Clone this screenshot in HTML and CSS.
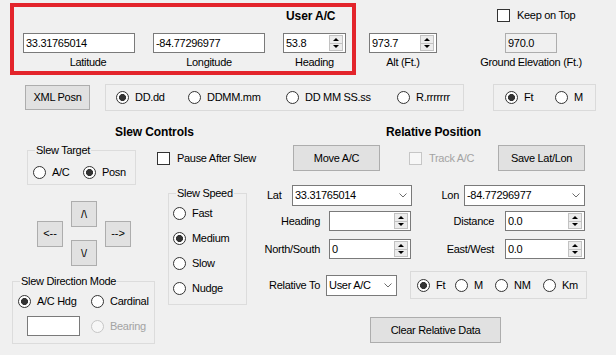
FILE: index.html
```html
<!DOCTYPE html>
<html lang="en">
<head>
  <meta charset="UTF-8" />
  <title>Slew</title>
  <link rel="stylesheet" href="styles.css">
</head>
<body>
  <!-- User A/C position -->
  <div class="top">
    <div class="user-ac">
      <div class="title">User A/C</div>
      <div class="fields">
        <div class="field">
          <div class="textbox tb-coord">33.31765014</div>
          <div class="caption shift">Latitude</div>
        </div>
        <div class="field">
          <div class="textbox tb-coord">-84.77296977</div>
          <div class="caption">Longitude</div>
        </div>
        <div class="field">
          <div class="textbox tb-hdg">53.8<span class="spin"><span class="up"></span><span class="down"></span></span></div>
          <div class="caption">Heading</div>
        </div>
      </div>
    </div>

    <div class="field alt">
      <div class="textbox tb-alt">973.7<span class="spin"><span class="up"></span><span class="down"></span></span></div>
      <div class="caption">Alt (Ft.)</div>
    </div>

    <div class="ground-col">
      <div class="check"><span class="box"></span>Keep on Top</div>
      <div class="field ground">
        <div class="textbox tb-elev readonly">970.0</div>
        <div class="caption">Ground Elevation (Ft.)</div>
      </div>
    </div>
  </div>

  <!-- Format toolbar -->
  <div class="toolbar">
    <div class="btn xml">XML Posn</div>
    <div class="radio-panel format-panel">
      <div class="radio on"><span class="dot"></span>DD.dd</div>
      <div class="radio"><span class="dot"></span>DDMM.mm</div>
      <div class="radio"><span class="dot"></span>DD MM SS.ss</div>
      <div class="radio"><span class="dot"></span>R.rrrrrrr</div>
    </div>
    <div class="radio-panel alt-units">
      <div class="radio on"><span class="dot"></span>Ft</div>
      <div class="radio"><span class="dot"></span>M</div>
    </div>
  </div>

  <div class="headings">
    <div class="heading-slew">Slew Controls</div>
    <div>Relative Position</div>
  </div>

  <div class="main">
    <!-- Slew target, arrows, direction -->
    <div class="slew-left">
      <fieldset class="group slew-target">
        <legend>Slew Target</legend>
        <div class="options">
          <div class="radio"><span class="dot"></span>A/C</div>
          <div class="radio on"><span class="dot"></span>Posn</div>
        </div>
      </fieldset>

      <div class="pad">
        <div class="btn arrow">&lt;--</div>
        <div class="pad-col">
          <div class="btn arrow">/\</div>
          <div class="btn arrow">\/</div>
        </div>
        <div class="btn arrow">--&gt;</div>
      </div>

      <fieldset class="group slew-dir">
        <legend>Slew Direction Mode</legend>
        <div class="options">
          <div class="radio on"><span class="dot"></span>A/C Hdg</div>
          <div class="radio"><span class="dot"></span>Cardinal</div>
          <div class="textbox tb-bearing"></div>
          <div class="radio off"><span class="dot"></span>Bearing</div>
        </div>
      </fieldset>
    </div>

    <!-- Pause + speed -->
    <div class="slew-mid">
      <div class="check pause"><span class="box"></span>Pause After Slew</div>
      <fieldset class="group slew-speed">
        <legend>Slew Speed</legend>
        <div class="options">
          <div class="radio"><span class="dot"></span>Fast</div>
          <div class="radio on"><span class="dot"></span>Medium</div>
          <div class="radio"><span class="dot"></span>Slow</div>
          <div class="radio"><span class="dot"></span>Nudge</div>
        </div>
      </fieldset>
    </div>

    <!-- Relative position -->
    <div class="relative">
      <div class="row actions">
        <div class="btn btn-wide move">Move A/C</div>
        <div class="check track off"><span class="box"></span>Track A/C</div>
        <div class="btn btn-wide">Save Lat/Lon</div>
      </div>

      <div class="row latlon">
        <div class="lbl lbl-lat">Lat</div>
        <div class="combo combo-lat">33.31765014<svg class="chev" width="8" height="5" viewBox="0 0 8 5"><polyline points="0.5,0.5 4,4 7.5,0.5" fill="none" stroke="#6d6d6d" stroke-width="1"/></svg></div>
        <div class="lbl lbl-lon">Lon</div>
        <div class="combo combo-lon">-84.77296977<svg class="chev" width="8" height="5" viewBox="0 0 8 5"><polyline points="0.5,0.5 4,4 7.5,0.5" fill="none" stroke="#6d6d6d" stroke-width="1"/></svg></div>
      </div>

      <div class="row offsets">
        <div class="lbl lbl-left">Heading</div>
        <div class="textbox tb-rel-left"><span class="spin"><span class="up"></span><span class="down"></span></span></div>
        <div class="lbl lbl-right">Distance</div>
        <div class="textbox tb-rel-right">0.0<span class="spin"><span class="up"></span><span class="down"></span></span></div>
      </div>

      <div class="row offsets second">
        <div class="lbl lbl-left">North/South</div>
        <div class="textbox tb-rel-left">0<span class="spin"><span class="up"></span><span class="down"></span></span></div>
        <div class="lbl lbl-right">East/West</div>
        <div class="textbox tb-rel-right">0.0<span class="spin"><span class="up"></span><span class="down"></span></span></div>
      </div>

      <div class="row relto">
        <div class="lbl lbl-relto">Relative To</div>
        <div class="combo combo-relto">User A/C<svg class="chev" width="8" height="5" viewBox="0 0 8 5"><polyline points="0.5,0.5 4,4 7.5,0.5" fill="none" stroke="#6d6d6d" stroke-width="1"/></svg></div>
        <div class="radio-panel dist-units">
          <div class="radio on"><span class="dot"></span>Ft</div>
          <div class="radio"><span class="dot"></span>M</div>
          <div class="radio"><span class="dot"></span>NM</div>
          <div class="radio"><span class="dot"></span>Km</div>
        </div>
      </div>

      <div class="btn clear">Clear Relative Data</div>
    </div>
  </div>
</body>
</html>
```

FILE: styles.css
```css
* {
  box-sizing: border-box;
}

html, body {
  background: #f0f0f0;
}

body {
  margin: 0;
  width: 616px;
  height: 355px;
  overflow: hidden;
  color: #000;
  font-family: "Liberation Sans", Arial, sans-serif;
  font-size: 11px;
  line-height: 13px;
  letter-spacing: -0.3px;
}

/* ── common controls ── */
.textbox {
  height: 20px;
  display: flex;
  align-items: center;
  padding-left: 2px;
  background: #fff;
  border: 1px solid #7a7a7a;
  white-space: nowrap;
}

.textbox.readonly {
  background: #f0f0f0;
  border-color: #adadad;
}

.spin {
  width: 14px;
  height: 16px;
  margin: 0 2px 0 auto;
  display: flex;
  flex-direction: column;
  background: #ececec;
  border: 1px solid #c2c2c2;
}

.spin span {
  flex: 1;
  display: flex;
  align-items: center;
  justify-content: center;
}

.spin span + span {
  border-top: 1px solid #c2c2c2;
}

.spin .up::before {
  content: '';
  border-left: 3px solid transparent;
  border-right: 3px solid transparent;
  border-bottom: 3px solid #000;
}

.spin .down::before {
  content: '';
  border-left: 3px solid transparent;
  border-right: 3px solid transparent;
  border-top: 3px solid #000;
}

.combo {
  height: 21px;
  display: flex;
  align-items: center;
  padding: 0 4px 0 2px;
  background: #fff;
  border: 1px solid #7a7a7a;
  white-space: nowrap;
}

.combo .chev {
  margin-left: auto;
  flex: none;
}

.btn {
  display: flex;
  align-items: center;
  justify-content: center;
  background: #e1e1e1;
  border: 1px solid #adadad;
  white-space: nowrap;
}

.check {
  display: flex;
  align-items: center;
  gap: 7px;
  white-space: nowrap;
}

.check .box {
  width: 13px;
  height: 13px;
  flex: none;
  background: #fff;
  border: 1px solid #333;
}

.check.off {
  color: #a3a3a3;
}

.check.off .box {
  border-color: #c6c6c6;
  background: #f7f7f7;
}

.radio {
  display: flex;
  align-items: center;
  gap: 6px;
  white-space: nowrap;
}

.radio .dot {
  width: 13px;
  height: 13px;
  flex: none;
  border-radius: 50%;
  background: #fff;
  border: 1px solid #333;
}

.radio.on .dot {
  background: radial-gradient(circle, #333 0 3.2px, #fff 3.8px);
}

.radio.off {
  color: #a3a3a3;
}

.radio.off .dot {
  border-color: #c6c6c6;
  background: #f7f7f7;
}

.radio-panel {
  height: 27px;
  display: grid;
  align-items: center;
  border: 1px solid #dadada;
}

fieldset.group {
  margin: 0;
  min-width: 0;
  border: 1px solid #dcdcdc;
}

/* legend sits after the fieldset's left padding */
fieldset.group legend {
  margin-left: 2px;
  padding: 0 1px;
  line-height: 13px;
}

/* ── top: user aircraft ── */
.top {
  display: flex;
  align-items: flex-start;
  height: 75px;
  padding: 3px 0 0 10px;
}

.user-ac {
  width: 346px;
  height: 72px;
  padding: 3px 0 0 9px;
  border: 4px solid #e3242b;
}

.title {
  margin-left: 263px;
  font-size: 12px;
  font-weight: bold;
  letter-spacing: -0.1px;
}

.fields {
  display: flex;
  gap: 18px;
  margin-top: 10px;
}

.field {
  display: flex;
  flex-direction: column;
}

.caption {
  margin-top: 3px;
  text-align: center;
  white-space: nowrap;
}

.caption.shift {
  padding-left: 18px;
}

.tb-coord { width: 112px; }
.tb-hdg   { width: 63px; }
.tb-alt   { width: 68px; }
.tb-elev  { width: 52px; }

.alt {
  margin: 30px 0 0 13px;
}

.ground-col {
  margin: 6px 0 0 60px;
}

.ground {
  width: 52px;
  margin: 11px 0 0 8px;
}

.ground .caption {
  margin: 3px -30px 0;
}

/* ── toolbar ── */
.toolbar {
  display: flex;
  align-items: flex-start;
  margin-top: 9px;
  padding-left: 25px;
}

.xml {
  width: 65px;
  height: 25px;
  margin-top: 1px;
}

.format-panel {
  width: 359px;
  margin-left: 15px;
  padding-left: 10px;
  grid-template-columns: 72px 98px 111px auto;
}

.alt-units {
  width: 103px;
  margin-left: 29px;
  padding-left: 11px;
  grid-template-columns: 50px auto;
}

.headings {
  display: flex;
  margin-top: 15px;
  padding-left: 115px;
  font-size: 12px;
  font-weight: bold;
  letter-spacing: -0.1px;
}

.heading-slew {
  width: 271px;
}

/* ── main area ── */
.main {
  display: flex;
  align-items: flex-start;
  margin-top: 1px;
  padding-left: 12px;
}

.slew-left {
  width: 143px;
  display: flex;
  flex-direction: column;
  align-items: flex-start;
}

.slew-target {
  width: 109px;
  margin: 4px 0 0 15px !important;
  padding: 9px 0 5px 5px;
}

.slew-target .options {
  display: grid;
  grid-template-columns: 50px auto;
}

.pad {
  display: flex;
  align-items: center;
  gap: 8px;
  margin: 16px 0 0 25px;
}

.pad-col {
  display: flex;
  flex-direction: column;
  gap: 13px;
}

.btn.arrow {
  width: 26px;
  height: 26px;
  letter-spacing: 0;
}

.slew-dir {
  width: 143px;
  margin-top: 9px !important;
  padding: 7px 0 7px 5px;
}

.slew-dir .options {
  display: grid;
  grid-template-columns: 73px auto;
  row-gap: 8px;
  align-items: center;
}

.tb-bearing {
  width: 53px;
  margin-left: 9px;
}

.slew-mid {
  width: 106px;
  padding-left: 2px;
  display: flex;
  flex-direction: column;
  align-items: flex-start;
}

.pause {
  margin-top: 12px;
}

.slew-speed {
  width: 79px;
  margin: 22px 0 0 11px !important;
  padding: 7px 0 9px 4px;
}

.slew-speed legend {
  margin-left: 3px !important;
}

.slew-speed .options {
  display: flex;
  flex-direction: column;
  gap: 12px;
}

/* ── relative position ── */
.relative {
  display: flex;
  flex-direction: column;
  align-items: flex-start;
}

.row {
  display: flex;
  align-items: center;
}

.actions {
  margin-top: 5px;
}

.btn-wide {
  width: 87px;
  height: 26px;
}

.move {
  margin-left: 32px;
}

.track {
  width: 89px;
  margin-left: 29px;
}

.lbl {
  white-space: nowrap;
}

.latlon {
  margin-top: 14px;
}

.lbl-lat {
  width: 31px;
  padding-left: 6px;
}

.combo-lat { width: 120px; }

.lbl-lon {
  width: 52px;
  padding-right: 5px;
  text-align: right;
}

.combo-lon { width: 121px; }

.offsets {
  margin-top: 5px;
}

.offsets.second {
  margin-top: 8px;
}

.lbl-left {
  width: 68px;
  padding-right: 9px;
  text-align: right;
}

.tb-rel-left { width: 82px; }

.lbl-right {
  width: 94px;
  padding-right: 11px;
  text-align: right;
}

.tb-rel-right { width: 80px; }

.relto {
  margin-top: 12px;
}

.lbl-relto {
  width: 65px;
  padding-right: 6px;
  text-align: right;
}

.combo-relto { width: 71px; }

.dist-units {
  width: 177px;
  height: 28px;
  margin-left: 13px;
  padding-left: 6px;
  grid-template-columns: 38px 40px 48px auto;
}

.clear {
  width: 131px;
  height: 26px;
  margin: 18px 0 0 109px;
}
```
